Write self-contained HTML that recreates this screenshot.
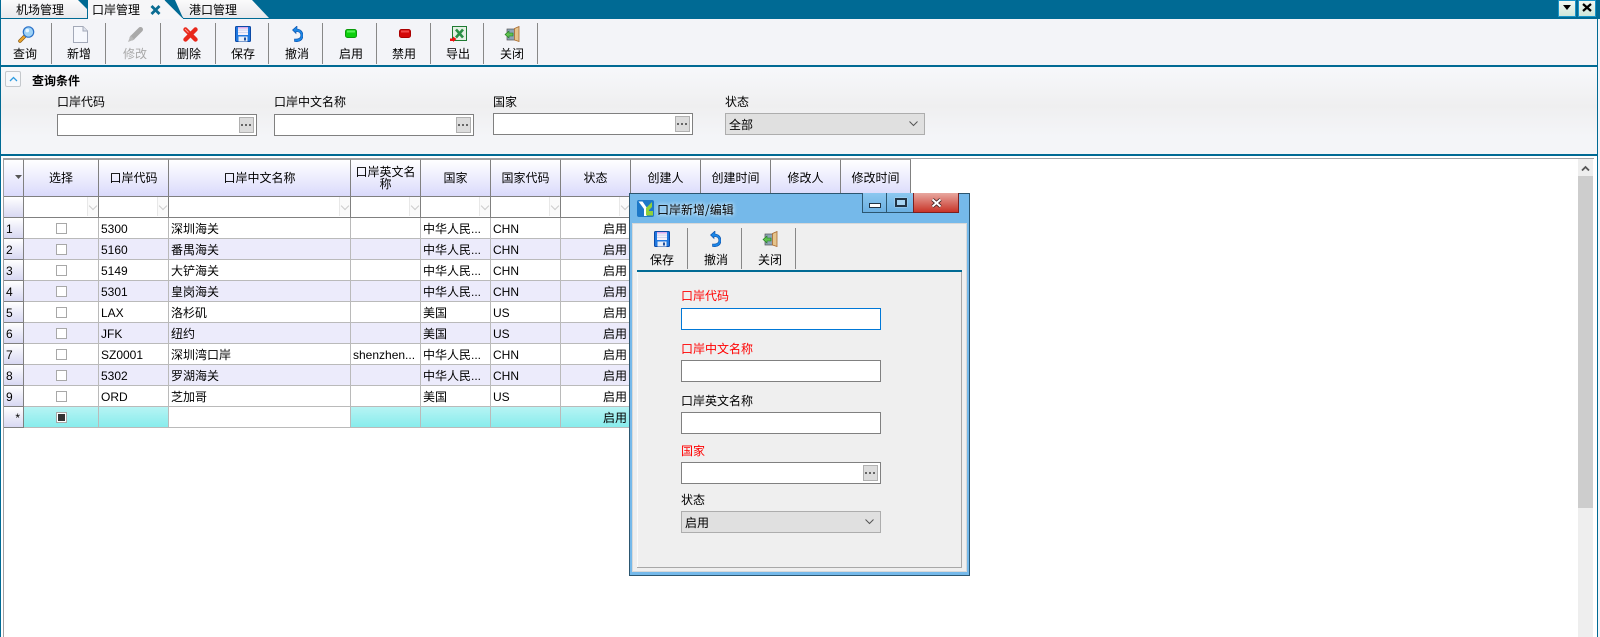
<!DOCTYPE html>
<html lang="zh"><head><meta charset="utf-8"><title>口岸管理</title>
<style>
html,body{margin:0;padding:0}
body{width:1600px;height:637px;overflow:hidden;position:relative;background:#fff;font:12px/14px "WenQuanYi Zen Hei","Noto Sans CJK SC",sans-serif;color:#000}
.a{position:absolute}
.t{position:absolute;white-space:nowrap;line-height:14px}
.s{position:absolute;width:1px;background:#888}
.inp{position:absolute;box-sizing:border-box;width:200px;height:22px;border:1px solid #808080;background:#fff}
.dots{position:absolute;right:2px;top:2px;width:15px;height:16px;box-sizing:border-box;border:1px solid #b0b0b0;background:#dcdcdc}
.dots:after{content:"";position:absolute;left:1px;top:6px;width:2px;height:2px;background:#666;box-shadow:4px 0 #666,8px 0 #666}
.sel{position:absolute;box-sizing:border-box;width:200px;height:22px;border:1px solid #adadad;background:#e0e0e0;padding:4px 0 0 3px;line-height:14px}
.sel svg{position:absolute;right:6px;top:7px}
svg{position:absolute;display:block}
table{position:absolute;left:4px;top:159px;border-collapse:separate;border-spacing:0;table-layout:fixed;width:907px}
td{box-sizing:border-box;padding:2px 0 0 2px;border-right:1px solid #bababa;border-bottom:1px solid #bababa;height:21px;white-space:nowrap;overflow:hidden;line-height:14px;position:relative;font-family:"Liberation Sans","WenQuanYi Zen Hei",sans-serif}
tr.h td{height:38px;background:linear-gradient(#fff,#dadafb);border-right:1px solid #808080;border-bottom:1px solid #808080;border-top:1px solid #a0a0a0;text-align:center;padding:0;font-family:"WenQuanYi Zen Hei",sans-serif;line-height:12px}
tr.f td{background:#fff;border-right:1px solid #808080;border-bottom:1px solid #808080;padding:0}
tr.f td:first-child,td.rh{background:linear-gradient(#fff,#d8d8f2);border-right:1px solid #808080;border-bottom:1px solid #808080}
tr.alt td:not(.rh){background:#ecebfb}
td.z{font-family:"WenQuanYi Zen Hei",sans-serif}
td.r{text-align:right;padding-right:3px;font-family:"WenQuanYi Zen Hei",sans-serif}
td.c:after{content:"";position:absolute;left:32px;top:5px;width:9px;height:9px;border:1px solid #a8a8a8;background:#fff}
td.cy{background:linear-gradient(#b6f4f4,#88ecec)!important}
td.cb:after{content:"";position:absolute;left:32px;top:5px;width:9px;height:9px;border:1px solid #a8a8a8;background:#333;box-shadow:inset 0 0 0 1px #fff}
.fb{position:absolute;right:0;top:0;width:11px;height:19px;box-sizing:border-box;border-left:1px solid #e8e8e8;background:#fafafa}
.fb:after{content:"";position:absolute;left:2px;top:6px;width:5px;height:5px;border-right:1px solid #ccc;border-bottom:1px solid #ccc;transform:rotate(45deg)}
</style></head><body>

<svg width="0" height="0" style="position:absolute"><defs>
<symbol id="save" viewBox="0 0 16 16"><rect x="0.5" y="0.5" width="15" height="15" rx="1" fill="#1f78e0" stroke="#0c4aa6"/><rect x="3" y="1" width="10" height="8" fill="#f4f0fb"/><rect x="3" y="1" width="10" height="1.5" fill="#d9a8ea"/><rect x="3" y="3.6" width="10" height="1" fill="#cfd6ee"/><rect x="3" y="6" width="10" height="1" fill="#cfd6ee"/><rect x="3.5" y="10.5" width="9" height="5" fill="#e8eef8"/><rect x="9" y="11.5" width="2" height="3" fill="#1f4f9c"/></symbol>
<symbol id="undo" viewBox="0 0 11 16"><path d="M5 0 L.5 4 L4 7.5 V5.5 C7.5 5.5 8.8 7.5 8.8 9.5 C8.8 12 6 13.5 2.5 13 V15.5 C8 16.5 11 13.5 11 9.5 C11 5.5 8 3 5 3 Z" fill="#1a86e6" stroke="#0b4ea8" stroke-width=".6"/></symbol>
<symbol id="door" viewBox="0 0 16 16"><rect x="3" y="3" width="9" height="11" fill="#8da4b6" stroke="#555" stroke-width=".7"/><path d="M10.5 2.5 L15 .5 V15.5 L10.5 14 Z" fill="#e6c48c" stroke="#a8692e" stroke-width=".8"/><path d="M1 8.5 L5 5 V7 H9 V10 H5 V12 Z" fill="#5fc24f" stroke="#1f7a1f" stroke-width=".6"/></symbol>
</defs></svg>

<!-- top tab bar -->
<div class="a" style="left:0;top:0;width:1600px;height:19px;background:#006a94"></div>
<svg style="left:0;top:0" width="300" height="20">
<defs><linearGradient id="tg" x1="0" y1="0" x2="0" y2="1"><stop offset="0" stop-color="#fbfbfb"/><stop offset="1" stop-color="#e8e9ec"/></linearGradient></defs>
<polygon points="1,0 78,0 87,9 87,18 1,18" fill="url(#tg)"/>
<polygon points="175,0 252,0 269,18 183,18" fill="url(#tg)"/>
<polygon points="88,0 165,0 183,18 183,20 88,20" fill="#f6f6f8"/>
<path d="M87.5 6 V19 M165 0 L183 18" stroke="#006a94" stroke-width="1" fill="none"/>
</svg>
<div class="t" style="left:16px;top:3px">机场管理</div>
<div class="t" style="left:92px;top:3px">口岸管理</div>
<svg style="left:150px;top:5px" width="11" height="10"><path d="M1.5 1 L9.5 9 M9.5 1 L1.5 9" stroke="#0a6c92" stroke-width="2.8"/></svg>
<div class="t" style="left:189px;top:3px">港口管理</div>

<div class="a" style="left:1558px;top:0;width:16px;height:15px;border:1px solid #1a94c8;background:linear-gradient(#f1f8f3,#cfe6da)"><svg style="left:4px;top:4px" width="9" height="6"><polygon points="0,0 8,0 4,5" fill="#000"/></svg></div>
<div class="a" style="left:1578px;top:0;width:16px;height:15px;border:1px solid #1a94c8;background:linear-gradient(#f1f8f3,#cfe6da)"><svg style="left:3px;top:2px" width="10" height="9"><path d="M1 1 L9 8 M9 1 L1 8" stroke="#000" stroke-width="2.2"/></svg></div>

<!-- toolbar -->
<div class="a" style="left:1px;top:19px;width:1596px;height:46px;background:#f3f4f8"></div>
<div class="a" style="left:0;top:65px;width:1598px;height:2px;background:#006a94"></div>
<div class="a" style="left:0;top:0;width:1px;height:637px;background:#006a94"></div>
<div class="a" style="left:1597px;top:0;width:1px;height:637px;background:#006a94"></div>
<div class="a" style="left:1598px;top:19px;width:2px;height:618px;background:#f3f4f8"></div>

<div class="s" style="left:51px;top:23px;height:41px"></div>
<div class="s" style="left:105px;top:23px;height:41px"></div>
<div class="s" style="left:160px;top:23px;height:41px"></div>
<div class="s" style="left:215px;top:23px;height:41px"></div>
<div class="s" style="left:268px;top:23px;height:41px"></div>
<div class="s" style="left:322px;top:23px;height:41px"></div>
<div class="s" style="left:376px;top:23px;height:41px"></div>
<div class="s" style="left:430px;top:23px;height:41px"></div>
<div class="s" style="left:483px;top:23px;height:41px"></div>
<div class="s" style="left:537px;top:23px;height:41px"></div>

<svg style="left:18px;top:26px" width="17" height="17" viewBox="0 0 17 17"><path d="M7 10 L2 15" stroke="#8a5a10" stroke-width="3.6" stroke-linecap="round"/><path d="M7 10 L2 15" stroke="#eda52c" stroke-width="2.2" stroke-linecap="round"/><circle cx="10.5" cy="6" r="5.2" fill="#9ed2f6" stroke="#2a70c8" stroke-width="1.2"/><circle cx="9.3" cy="4.6" r="1.8" fill="#e8f6ff"/></svg>
<svg style="left:73px;top:26px" width="15" height="17" viewBox="0 0 15 17"><path d="M.5 .5 H10 L14.5 5 V16.5 H.5 Z" fill="#f6f8fd" stroke="#a3a9b8"/><path d="M10 .5 V5 H14.5" fill="#dfe4ee" stroke="#a3a9b8"/></svg>
<svg style="left:127px;top:26px" width="17" height="17" viewBox="0 0 17 17"><path d="M5 12 L13.5 3.5" stroke="#a9a9a9" stroke-width="5" stroke-linecap="round"/><path d="M3.5 9.5 L7.5 13.5 L1 16 Z" fill="#b8b8b8"/></svg>
<svg style="left:183px;top:27px" width="15" height="15" viewBox="0 0 15 15"><path d="M2.5 2.5 L12.5 12.5 M12.5 2.5 L2.5 12.5" stroke="#e8281c" stroke-width="4.4" stroke-linecap="round"/><path d="M2 2 L5.5 5.5" stroke="#ff9c8c" stroke-width="1"/></svg>
<svg style="left:235px;top:26px" width="16" height="16"><use href="#save"/></svg>
<svg style="left:292px;top:26px" width="11" height="16" viewBox="0 0 11 16"><use href="#undo"/></svg>
<svg style="left:345px;top:29px" width="12" height="9"><rect x=".5" y=".5" width="11" height="8" rx="2" fill="#0ccf0c" stroke="#0a9a0a"/><rect x="2" y="1.5" width="8" height="2" fill="#56f056"/></svg>
<svg style="left:399px;top:29px" width="12" height="9"><rect x=".5" y=".5" width="11" height="8" rx="2" fill="#d40808" stroke="#a00"/><rect x="2" y="1.5" width="8" height="2" fill="#f04848"/></svg>
<svg style="left:450px;top:26px" width="17" height="17" viewBox="0 0 17 17"><rect x="2.5" y=".5" width="14" height="14" fill="#e4f0e4" stroke="#1e7a32"/><path d="M6 3.5 L13 11.5 M13 3.5 L6 11.5" stroke="#2a8f45" stroke-width="2.6"/><path d="M0 12.5 H3 V10.5 L6.5 13 L3 16 V15 H0 Z" fill="#ee1111"/></svg>
<svg style="left:504px;top:26px" width="16" height="16"><use href="#door"/></svg>

<div class="t" style="left:13px;top:47px">查询</div>
<div class="t" style="left:67px;top:47px">新增</div>
<div class="t" style="left:123px;top:47px;color:#a8a8a8">修改</div>
<div class="t" style="left:177px;top:47px">删除</div>
<div class="t" style="left:231px;top:47px">保存</div>
<div class="t" style="left:285px;top:47px">撤消</div>
<div class="t" style="left:339px;top:47px">启用</div>
<div class="t" style="left:392px;top:47px">禁用</div>
<div class="t" style="left:446px;top:47px">导出</div>
<div class="t" style="left:500px;top:47px">关闭</div>

<!-- query panel -->
<div class="a" style="left:1px;top:67px;width:1596px;height:87px;background:linear-gradient(#f7f8fb,#efeff0 45%,#f4f5f8 80%)"></div>
<div class="a" style="left:0;top:154px;width:1598px;height:2px;background:#006a94"></div>
<div class="a" style="left:5px;top:71px;width:14px;height:14px;border:1px solid #c4c8cc;border-radius:2px;background:#f6f8fb"><svg style="left:3px;top:4px" width="9" height="6"><path d="M1 5 L4.5 1.5 L8 5" stroke="#2e9be0" stroke-width="1.3" fill="none"/></svg></div>
<div class="t" style="left:32px;top:74px;font-weight:bold">查询条件</div>

<div class="t" style="left:57px;top:95px">口岸代码</div>
<div class="inp" style="left:57px;top:114px"><div class="dots"></div></div>
<div class="t" style="left:274px;top:95px">口岸中文名称</div>
<div class="inp" style="left:274px;top:114px"><div class="dots"></div></div>
<div class="t" style="left:493px;top:95px">国家</div>
<div class="inp" style="left:493px;top:113px"><div class="dots"></div></div>
<div class="t" style="left:725px;top:95px">状态</div>
<div class="sel" style="left:725px;top:113px">全部<svg width="9" height="6"><path d="M.5 .5 L4.5 4.5 L8.5 .5" stroke="#555" fill="none"/></svg></div>

<!-- grid -->
<div class="a" style="left:3px;top:158px;width:1591px;height:479px;background:#fff;border-top:1px solid #a0a0a4;border-left:1px solid #a0a0a4;box-sizing:border-box"></div>
<div class="a" style="left:1578px;top:159px;width:15px;height:478px;background:#eee"></div>
<div class="a" style="left:1578px;top:176px;width:15px;height:332px;background:#cdcdcd"></div>
<svg style="left:1581px;top:165px" width="9" height="7"><path d="M1 5.5 L4.5 2 L8 5.5" stroke="#555" stroke-width="1.8" fill="none"/></svg>

<table><colgroup><col style="width:20px"><col style="width:75px"><col style="width:70px"><col style="width:182px"><col style="width:70px"><col style="width:70px"><col style="width:70px"><col style="width:70px"><col style="width:70px"><col style="width:70px"><col style="width:70px"><col style="width:70px"></colgroup>
<tr class="h"><td><svg style="left:11px;top:15px" width="8" height="5"><polygon points="0,0 7,0 3.5,4" fill="#555"/></svg></td><td>选择</td><td>口岸代码</td><td>口岸中文名称</td><td>口岸英文名<br>称</td><td>国家</td><td>国家代码</td><td>状态</td><td>创建人</td><td>创建时间</td><td>修改人</td><td>修改时间</td></tr>
<tr class="f"><td></td><td><div class="fb"></div></td><td><div class="fb"></div></td><td><div class="fb"></div></td><td><div class="fb"></div></td><td><div class="fb"></div></td><td><div class="fb"></div></td><td><div class="fb"></div></td><td></td><td></td><td></td><td></td></tr>
<tr><td class="rh">1</td><td class="c"></td><td>5300</td><td class="z">深圳海关</td><td></td><td class="z">中华人民...</td><td>CHN</td><td class="r">启用</td></tr>
<tr class="alt"><td class="rh">2</td><td class="c"></td><td>5160</td><td class="z">番禺海关</td><td></td><td class="z">中华人民...</td><td>CHN</td><td class="r">启用</td></tr>
<tr><td class="rh">3</td><td class="c"></td><td>5149</td><td class="z">大铲海关</td><td></td><td class="z">中华人民...</td><td>CHN</td><td class="r">启用</td></tr>
<tr class="alt"><td class="rh">4</td><td class="c"></td><td>5301</td><td class="z">皇岗海关</td><td></td><td class="z">中华人民...</td><td>CHN</td><td class="r">启用</td></tr>
<tr><td class="rh">5</td><td class="c"></td><td>LAX</td><td class="z">洛杉矶</td><td></td><td class="z">美国</td><td>US</td><td class="r">启用</td></tr>
<tr class="alt"><td class="rh">6</td><td class="c"></td><td>JFK</td><td class="z">纽约</td><td></td><td class="z">美国</td><td>US</td><td class="r">启用</td></tr>
<tr><td class="rh">7</td><td class="c"></td><td>SZ0001</td><td class="z">深圳湾口岸</td><td>shenzhen...</td><td class="z">中华人民...</td><td>CHN</td><td class="r">启用</td></tr>
<tr class="alt"><td class="rh">8</td><td class="c"></td><td>5302</td><td class="z">罗湖海关</td><td></td><td class="z">中华人民...</td><td>CHN</td><td class="r">启用</td></tr>
<tr><td class="rh">9</td><td class="c"></td><td>ORD</td><td class="z">芝加哥</td><td></td><td class="z">美国</td><td>US</td><td class="r">启用</td></tr>
<tr><td class="rh" style="text-align:right;padding-right:3px">*</td><td class="cy cb"></td><td class="cy"></td><td></td><td class="cy"></td><td class="cy"></td><td class="cy"></td><td class="cy r">启用</td></tr>
</table>

<!-- dialog -->
<div class="a" style="left:629px;top:193px;width:341px;height:383px;box-sizing:border-box;border:1px solid #2c5670;background:#75b9ea"></div>
<div class="a" style="left:632px;top:223px;width:335px;height:349px;background:#efefef;box-sizing:border-box;border:1px solid #d8d8d8"></div>
<svg style="left:637px;top:200px" width="17" height="17" viewBox="0 0 17 17"><rect width="17" height="17" rx="2" fill="#1d78c8"/><path d="M1.5 1.5 L7 9 V16 H10 V8 L5.5 1.5 Z" fill="#fff"/><path d="M9 8 L15 2 V7 L12 10 V11 H16 V15.5 H9 Z" fill="#8fd03a"/></svg>
<div class="t" style="left:657px;top:203px;text-shadow:0 0 4px #dff1ff,0 0 4px #dff1ff">口岸新增/编辑</div>
<div class="a" style="left:862px;top:193px;width:25px;height:20px;box-sizing:border-box;border:1px solid #2c5670;border-top:0;background:linear-gradient(#8cc8f0,#6cb0e2)"><div class="a" style="left:6px;top:10px;width:10px;height:3px;border:1px solid #234;background:#fff"></div></div>
<div class="a" style="left:887px;top:193px;width:26px;height:20px;box-sizing:border-box;border-bottom:1px solid #2c5670;background:linear-gradient(#8cc8f0,#6cb0e2)"><div class="a" style="left:8px;top:5px;width:8px;height:5px;border:2px solid #234;background:#a8d4f2;box-shadow:0 0 1px #fff"></div></div>
<div class="a" style="left:913px;top:193px;width:46px;height:20px;box-sizing:border-box;border:1px solid #7a2020;border-top:0;background:linear-gradient(#e8a8a0,#c83428)"><svg style="left:17px;top:5px" width="11" height="10"><path d="M1.5 1.5 L9.5 8.5 M9.5 1.5 L1.5 8.5" stroke="#3a2020" stroke-width="3.6"/><path d="M1.5 1.5 L9.5 8.5 M9.5 1.5 L1.5 8.5" stroke="#fff" stroke-width="2"/></svg></div>

<div class="s" style="left:687px;top:228px;height:41px"></div>
<div class="s" style="left:741px;top:228px;height:41px"></div>
<div class="s" style="left:795px;top:228px;height:41px"></div>
<svg style="left:654px;top:231px" width="16" height="16"><use href="#save"/></svg>
<svg style="left:710px;top:231px" width="11" height="16" viewBox="0 0 11 16"><use href="#undo"/></svg>
<svg style="left:762px;top:231px" width="16" height="16"><use href="#door"/></svg>
<div class="t" style="left:650px;top:253px">保存</div>
<div class="t" style="left:704px;top:253px">撤消</div>
<div class="t" style="left:758px;top:253px">关闭</div>
<div class="a" style="left:637px;top:270px;width:325px;height:2px;background:#006a94"></div>
<div class="a" style="left:961px;top:272px;width:1px;height:295px;background:#a8a8a8"></div>
<div class="a" style="left:637px;top:567px;width:325px;height:1px;background:#a8a8a8"></div>
<div class="a" style="left:637px;top:272px;width:1px;height:295px;background:#fafafa"></div>

<div class="t" style="left:681px;top:289px;color:#f00">口岸代码</div>
<div class="inp" style="left:681px;top:308px;border-color:#0078d7"></div>
<div class="t" style="left:681px;top:342px;color:#f00">口岸中文名称</div>
<div class="inp" style="left:681px;top:360px"></div>
<div class="t" style="left:681px;top:394px">口岸英文名称</div>
<div class="inp" style="left:681px;top:412px"></div>
<div class="t" style="left:681px;top:444px;color:#f00">国家</div>
<div class="inp" style="left:681px;top:462px"><div class="dots"></div></div>
<div class="t" style="left:681px;top:493px">状态</div>
<div class="sel" style="left:681px;top:511px">启用<svg width="9" height="6"><path d="M.5 .5 L4.5 4.5 L8.5 .5" stroke="#555" fill="none"/></svg></div>

</body></html>
